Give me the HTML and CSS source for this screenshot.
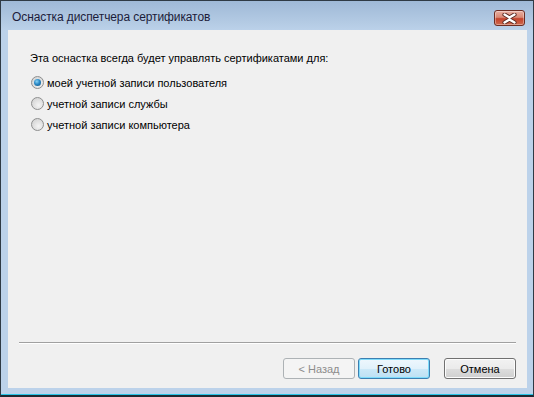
FILE: index.html
```html
<!DOCTYPE html>
<html lang="ru">
<head>
<meta charset="utf-8">
<title>Оснастка диспетчера сертификатов</title>
<link rel="stylesheet" href="styles.css">
</head>
<body>
<div class="window">
  <div class="titlebar">
    <span class="title">Оснастка диспетчера сертификатов</span>
    <button class="close" aria-label="Закрыть">
      <svg width="17" height="11" viewBox="0 0 17 11">
        <path d="M3.5 1.5 L8.5 4.5 L13.5 1.5 M3.5 9.5 L8.5 6.5 L13.5 9.5" fill="none" stroke="#5a2a22" stroke-width="4.2" stroke-linecap="round" stroke-linejoin="round"/>
        <path d="M3.5 1.5 L8.5 4.5 L13.5 1.5 M3.5 9.5 L8.5 6.5 L13.5 9.5" fill="none" stroke="#ffffff" stroke-width="2.4" stroke-linecap="round" stroke-linejoin="round"/>
      </svg>
    </button>
  </div>
  <div class="client">
    <p class="heading">Эта оснастка всегда будет управлять сертификатами для:</p>
    <div class="options">
      <label class="option"><span class="radio checked"></span>моей учетной записи пользователя</label>
      <label class="option"><span class="radio"></span>учетной записи службы</label>
      <label class="option"><span class="radio"></span>учетной записи компьютера</label>
    </div>
    <div class="footer">
      <div class="separator"></div>
      <div class="buttons">
        <button class="btn disabled">&lt; Назад</button>
        <button class="btn default">Готово</button>
        <button class="btn cancel">Отмена</button>
      </div>
    </div>
  </div>
</div>
</body>
</html>
```

FILE: styles.css
```css
html, body {
  margin: 0;
  padding: 0;
  background: #ffffff;
}

body {
  font-family: "Liberation Sans", Arial, sans-serif;
  font-size: 11px;
  color: #000;
}

.window {
  width: 534px;
  height: 397px;
  box-sizing: border-box;
  border: 1px solid #2f3a45;
  border-bottom: 2px solid #1d2a33;
  background: linear-gradient(to bottom, #9fb9d7 0px, #b4cbe4 22px, #bcd2ea 30px, #bcd2ea 100%);
  display: flex;
  flex-direction: column;
  box-shadow: inset 0 -1px 0 #27c4e6;
}

.titlebar {
  height: 29px;
  display: flex;
  align-items: center;
  padding: 0 7px 0 11px;
  flex-shrink: 0;
}

.title {
  font-size: 12px;
  color: #1c1c3a;
  flex: 1;
  padding-top: 3px;
  letter-spacing: -0.1px;
}

.close {
  width: 31px;
  height: 16px;
  margin-top: 5px;
  margin-right: 1px;
  padding: 0;
  border: 1px solid #6d2d23;
  border-radius: 3px;
  background: linear-gradient(to bottom, #e9b0a2 0%, #d98975 45%, #c4432c 55%, #cf6a4e 100%);
  display: flex;
  align-items: center;
  justify-content: center;
  box-shadow: inset 0 0 0 1px rgba(255,255,255,0.35);
}

.client {
  flex: 1;
  margin: 0 6px 7px 7px;
  background: #f0f0f0;
  display: flex;
  flex-direction: column;
  padding: 21px 11px 9px 22px;
}

.heading {
  margin: 0;
  line-height: 14px;
  height: 14px;
}

.options {
  margin-top: 7px;
  display: flex;
  flex-direction: column;
}

.option {
  height: 21px;
  display: flex;
  align-items: center;
  gap: 3px;
  margin-left: 1px;
}

.radio {
  width: 11px;
  height: 11px;
  border-radius: 50%;
  border: 1px solid #8e8f8f;
  background: radial-gradient(circle at 60% 65%, #f4f4f4 0%, #dcdcdc 60%, #cfcfcf 100%);
  position: relative;
  flex-shrink: 0;
}

.radio.checked::after {
  content: "";
  position: absolute;
  left: 2px;
  top: 2px;
  width: 7px;
  height: 7px;
  border-radius: 50%;
  background: radial-gradient(circle at 40% 35%, #8ad4f5 0%, #2b8ac8 45%, #0d4f7a 100%);
}

.footer {
  margin-top: auto;
  margin-left: -11px;
}

.separator {
  height: 1px;
  background: #a0a0a0;
  border-bottom: 1px solid #ffffff;
}

.buttons {
  display: flex;
  justify-content: flex-end;
  margin-top: 14px;
}

.btn {
  width: 72px;
  height: 21px;
  box-sizing: border-box;
  font-family: "Liberation Sans", Arial, sans-serif;
  font-size: 11px;
  color: #000;
  border: 1px solid #707070;
  border-radius: 3px;
  background: linear-gradient(to bottom, #f2f2f2 0%, #ebebeb 50%, #dddddd 51%, #cfcfcf 100%);
  padding: 0;
  box-shadow: inset 0 0 0 1px #fcfcfc;
}

.btn.disabled {
  color: #8d8d8d;
  border-color: #adb2b5;
  background: #f4f4f4;
  box-shadow: none;
}

.btn.default {
  margin-left: 3px;
  border-color: #3c7fb1;
  background: linear-gradient(to bottom, #eef7fd 0%, #e1f1fb 50%, #cde9f8 51%, #bde0f3 100%);
  box-shadow: inset 0 0 0 1px #7fdcfb;
}

.btn.cancel {
  margin-left: 14px;
}
```
